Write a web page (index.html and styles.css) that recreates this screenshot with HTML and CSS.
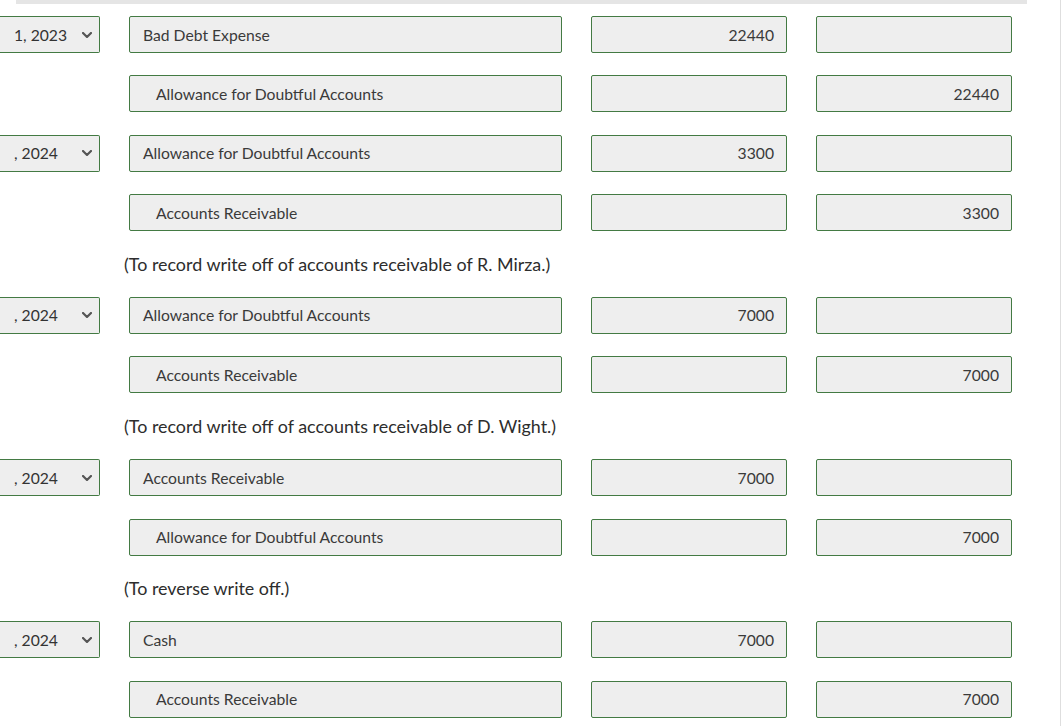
FILE: index.html
```html
<!DOCTYPE html>
<html>
<head>
<meta charset="utf-8">
<link rel="stylesheet" href="styles.css">
</head>
<body>
<div class="sheet">
  <div class="topbar"></div>
  <div class="entries">
    <div class="row">
      <div class="date"><span class="date-text">1, 2023</span><svg class="chev" viewBox="0 0 10 6"><path d="M1 1 L5 5 L9 1" /></svg></div>
      <div class="field account">Bad Debt Expense</div>
      <div class="field amount">22440</div>
      <div class="field amount"></div>
    </div>
    <div class="row">
      <div class="blank"></div>
      <div class="field account credit">Allowance for Doubtful Accounts</div>
      <div class="field amount"></div>
      <div class="field amount">22440</div>
    </div>
    <div class="row">
      <div class="date"><span class="date-text">, 2024</span><svg class="chev" viewBox="0 0 10 6"><path d="M1 1 L5 5 L9 1" /></svg></div>
      <div class="field account">Allowance for Doubtful Accounts</div>
      <div class="field amount">3300</div>
      <div class="field amount"></div>
    </div>
    <div class="row">
      <div class="blank"></div>
      <div class="field account credit">Accounts Receivable</div>
      <div class="field amount"></div>
      <div class="field amount">3300</div>
    </div>
    <div class="note">(To record write off of accounts receivable of R. Mirza.)</div>
    <div class="row">
      <div class="date"><span class="date-text">, 2024</span><svg class="chev" viewBox="0 0 10 6"><path d="M1 1 L5 5 L9 1" /></svg></div>
      <div class="field account">Allowance for Doubtful Accounts</div>
      <div class="field amount">7000</div>
      <div class="field amount"></div>
    </div>
    <div class="row">
      <div class="blank"></div>
      <div class="field account credit">Accounts Receivable</div>
      <div class="field amount"></div>
      <div class="field amount">7000</div>
    </div>
    <div class="note">(To record write off of accounts receivable of D. Wight.)</div>
    <div class="row">
      <div class="date"><span class="date-text">, 2024</span><svg class="chev" viewBox="0 0 10 6"><path d="M1 1 L5 5 L9 1" /></svg></div>
      <div class="field account">Accounts Receivable</div>
      <div class="field amount">7000</div>
      <div class="field amount"></div>
    </div>
    <div class="row">
      <div class="blank"></div>
      <div class="field account credit">Allowance for Doubtful Accounts</div>
      <div class="field amount"></div>
      <div class="field amount">7000</div>
    </div>
    <div class="note">(To reverse write off.)</div>
    <div class="row">
      <div class="date"><span class="date-text">, 2024</span><svg class="chev" viewBox="0 0 10 6"><path d="M1 1 L5 5 L9 1" /></svg></div>
      <div class="field account">Cash</div>
      <div class="field amount">7000</div>
      <div class="field amount"></div>
    </div>
    <div class="row">
      <div class="blank"></div>
      <div class="field account credit">Accounts Receivable</div>
      <div class="field amount"></div>
      <div class="field amount">7000</div>
    </div>
  </div>
</div>
</body>
</html>
```
FILE: styles.css
```css
html, body {
  margin: 0;
  padding: 0;
  background: #ffffff;
}
body {
  font-family: Lato, "Liberation Sans", sans-serif;
  color: #333333;
  overflow: hidden;
}
.sheet {
  width: 1060px;
  height: 726px;
  border-right: 1px solid #dedede;
  box-sizing: content-box;
}
.topbar {
  margin-left: 16px;
  width: 1011px;
  height: 4px;
  background: #e5e5e5;
}
.entries {
  padding-top: 12px;
  display: flex;
  flex-direction: column;
  gap: 22.4px;
}
.row {
  display: grid;
  grid-template-columns: 100px 433px 196px 196px;
  column-gap: 29px;
  height: 37px;
}
.field, .date {
  box-sizing: border-box;
  height: 37px;
  background: #eeeeee;
  border: 1px solid #437a43;
  border-radius: 2px;
  font-size: 15.7px;
  color: #3a3a3a;
  display: flex;
  align-items: center;
  white-space: nowrap;
  overflow: hidden;
}
.date {
  border-left: none;
  border-radius: 0 2px 2px 0;
  padding-left: 14px;
  justify-content: space-between;
  padding-right: 7px;
}
.date-text {
  color: #333333;
}
.chev {
  width: 10px;
  height: 6px;
  flex: none;
  fill: none;
  stroke: #555555;
  stroke-width: 2.2;
  stroke-linecap: round;
  stroke-linejoin: round;
}
.account {
  padding-left: 13px;
}
.account.credit {
  padding-left: 26px;
}
.amount {
  justify-content: flex-end;
  padding-right: 12px;
}
.note {
  height: 21px;
  line-height: 21px;
  padding-left: 124px;
  font-size: 17.9px;
  color: #2d2d2d;
}
```
